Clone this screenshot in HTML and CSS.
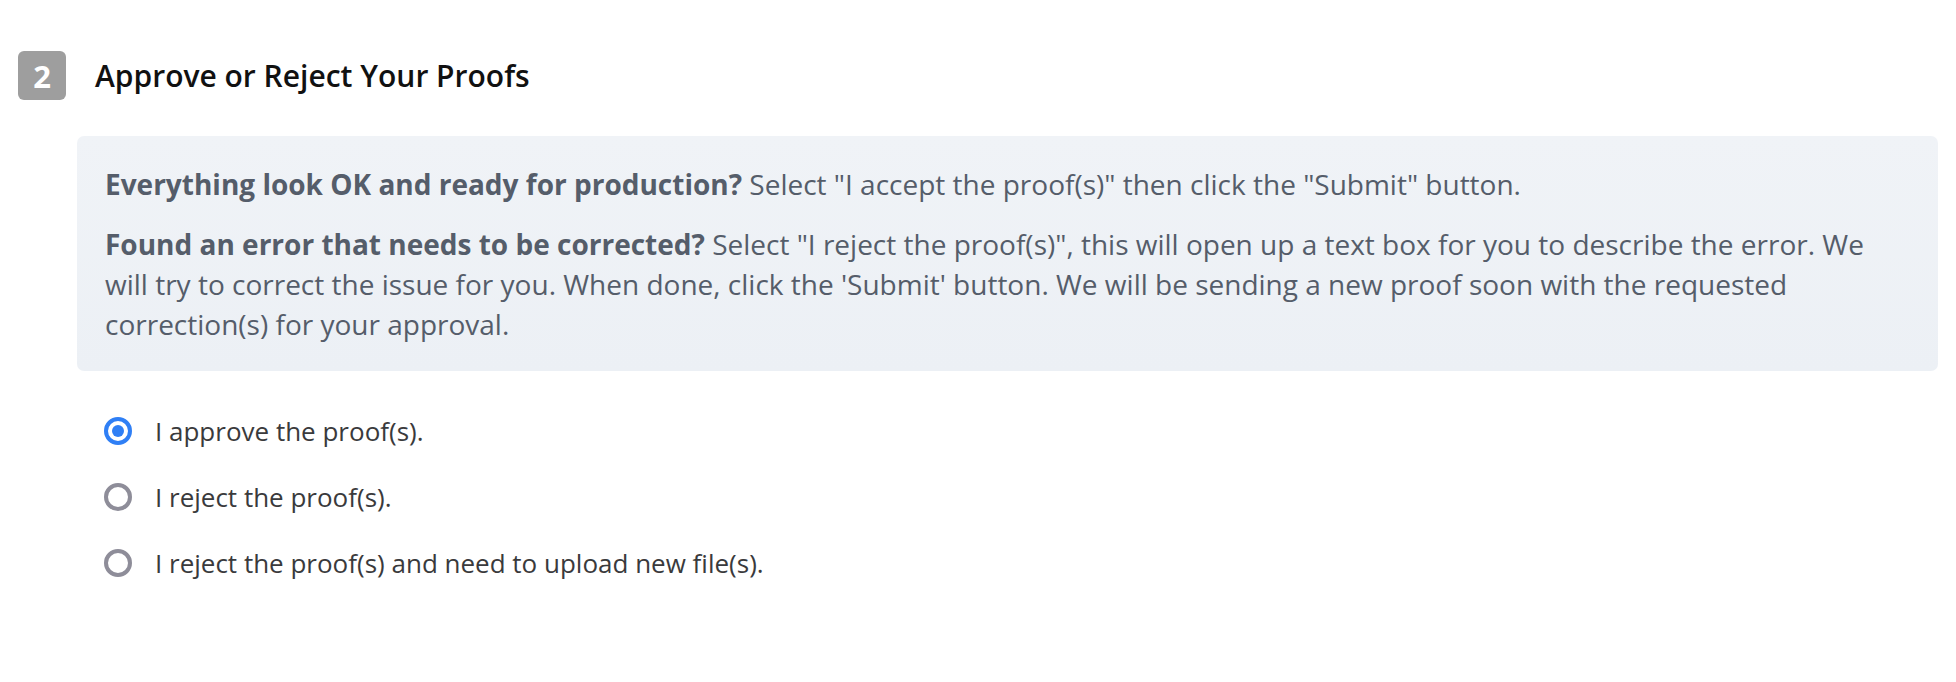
FILE: index.html
```html
<!DOCTYPE html>
<html>
<head>
<meta charset="utf-8">
<link rel="stylesheet" href="styles.css">
</head>
<body>
<section class="step">
  <div class="step-head">
    <div class="step-num">2</div>
    <h2 class="step-title">Approve or Reject Your Proofs</h2>
  </div>
  <div class="info">
    <p><b>Everything look OK and ready for production?</b> Select "I accept the proof(s)" then click the "Submit" button.</p>
    <p><b>Found an error that needs to be corrected?</b> Select "I reject the proof(s)", this will open up a text box for you to describe the error. We will try to correct the issue for you. When done, click the 'Submit' button. We will be sending a new proof soon with the requested correction(s) for your approval.</p>
  </div>
  <div class="options">
    <label class="opt"><span class="radio checked"></span><span class="opt-text">I approve the proof(s).</span></label>
    <label class="opt"><span class="radio"></span><span class="opt-text">I reject the proof(s).</span></label>
    <label class="opt"><span class="radio"></span><span class="opt-text">I reject the proof(s) and need to upload new file(s).</span></label>
  </div>
</section>
</body>
</html>
```
FILE: styles.css
```css
html, body {
  margin: 0;
  padding: 0;
  background: #fff;
}
body {
  font-family: "Open Sans", "Noto Sans", sans-serif;
}
.step {
  padding: 51px 18px 0 18px;
}
.step-head {
  display: flex;
  align-items: center;
  gap: 29px;
}
.step-num {
  width: 48px;
  height: 49px;
  border-radius: 6px;
  background: #9e9e9e;
  color: #fff;
  font-weight: 700;
  font-size: 31px;
  display: flex;
  align-items: center;
  justify-content: center;
}
.step-title {
  margin: 0;
  font-size: 30px;
  font-weight: 600;
  color: #111;
}
.info {
  margin: 36px 0 0 59px;
  background: linear-gradient(#f0f3f7, #ecf0f5);
  border-radius: 7px;
  padding: 28px 28px 27px 28px;
  color: #555d6a;
  font-size: 28px;
  line-height: 40px;
}
.info p {
  margin: 0;
}
.info p + p {
  margin-top: 20px;
}
.info b {
  font-weight: 700;
}
.options {
  display: flex;
  flex-direction: column;
  gap: 26px;
  margin: 40px 0 0 86px;
}
.opt {
  display: flex;
  align-items: center;
  gap: 23px;
  color: #3a3a3c;
  font-size: 26px;
  line-height: 40px;
}
.radio {
  width: 20px;
  height: 20px;
  border: 4px solid #8e8d99;
  border-radius: 50%;
  box-sizing: content-box;
  position: relative;
  flex: none;
}
.radio.checked {
  border-color: #2f7ff5;
}
.radio.checked::after {
  content: "";
  position: absolute;
  left: 4px;
  top: 4px;
  width: 12px;
  height: 12px;
  border-radius: 50%;
  background: #2f7ff5;
}
```
